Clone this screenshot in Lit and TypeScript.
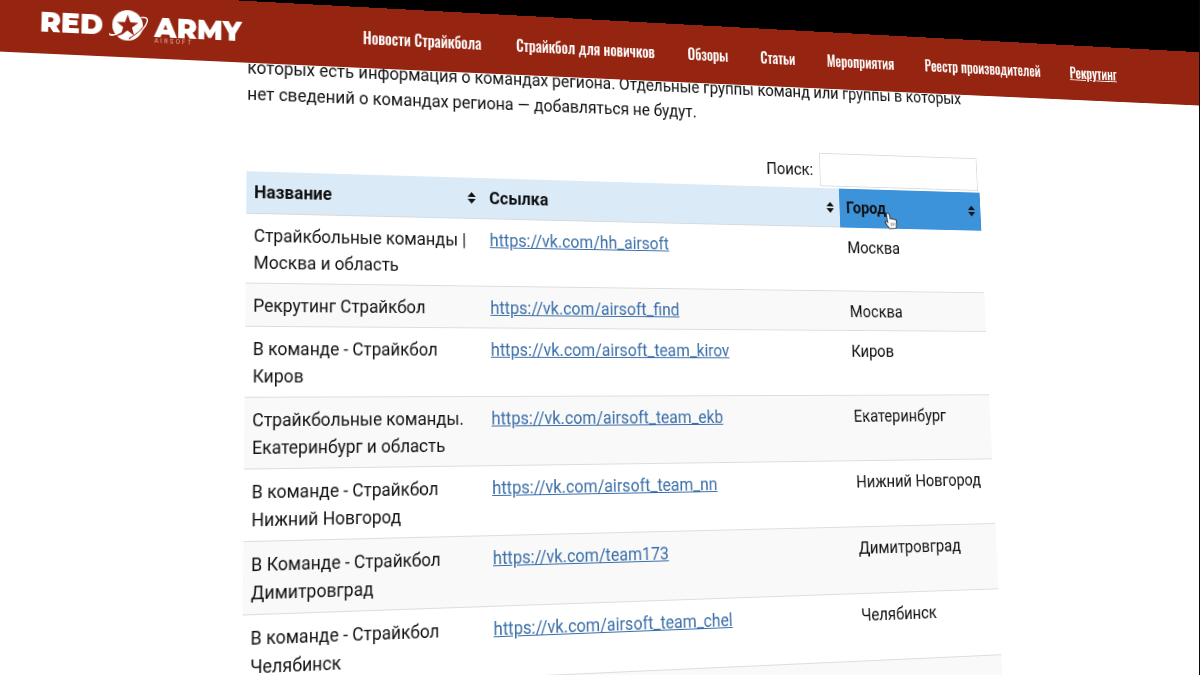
import { LitElement, html, css, svg } from "lit";
import { customElement, property } from "lit/decorators.js";
import { classMap } from "lit/directives/class-map.js";

interface Team {
  name: string;
  link: string;
  city: string;
}

const NAV = [
  "Новости Страйкбола",
  "Страйкбол для новичков",
  "Обзоры",
  "Статьи",
  "Мероприятия",
  "Реестр производителей",
  "Рекрутинг",
];

const COLUMNS = ["Название", "Ссылка", "Город"];

const TEAMS: Team[] = [
  { name: "Страйкбольные команды | Москва и область", link: "https://vk.com/hh_airsoft", city: "Москва" },
  { name: "Рекрутинг Страйкбол", link: "https://vk.com/airsoft_find", city: "Москва" },
  { name: "В команде - Страйкбол Киров", link: "https://vk.com/airsoft_team_kirov", city: "Киров" },
  { name: "Страйкбольные команды. Екатеринбург и область", link: "https://vk.com/airsoft_team_ekb", city: "Екатеринбург" },
  { name: "В команде - Страйкбол Нижний Новгород", link: "https://vk.com/airsoft_team_nn", city: "Нижний Новгород" },
  { name: "В Команде - Страйкбол Димитровград", link: "https://vk.com/team173", city: "Димитровград" },
  { name: "В команде - Страйкбол Челябинск", link: "https://vk.com/airsoft_team_chel", city: "Челябинск" },
];

@customElement("site-logo")
export class SiteLogo extends LitElement {
  static styles = css`
    :host {
      display: block;
    }
    .logo {
      display: flex;
      align-items: center;
      gap: 6px;
      color: #fff;
      text-decoration: none;
      font: 900 28px/32px Montserrat, Inter, "Liberation Sans", sans-serif;
    }
    .mark {
      display: block;
      width: 40px;
      height: 34px;
    }
    .second {
      position: relative;
    }
    .sub {
      position: absolute;
      left: 0;
      top: 26px;
      color: #dfa79d;
      font: 500 6px/8px Inter, "Liberation Sans", sans-serif;
      letter-spacing: 2px;
    }
  `;

  render() {
    return html`
      <a class="logo" href="#">
        <span>RED</span>
        <svg class="mark" viewBox="0 0 40 34" aria-hidden="true">
          ${svg`
            <circle cx="18.500" cy="16.500" r="15.500" fill="#fff"/>
            <path d="M18.500 5.500l2.700 7.800 8.200.2-6.500 5 2.300 7.900-6.700-4.700-6.700 4.700 2.300-7.900-6.500-5 8.200-.2z" fill="#952410"/>
            <path d="M1 27.500c4 1 9-.5 14-4" fill="none" stroke="#952410" stroke-width="1.600"/>
            <path d="M0 24.800c1 2.400 8 1.400 13.500-2.600-4 4.200-10 6.800-12.800 5.300-1-.6-1.100-1.700-.7-2.700z" fill="#fff"/>
            <path d="M37 13.500c-3.500 6.500-10 12.500-17 16.500" fill="none" stroke="#952410" stroke-width="1.400"/>
            <path d="M31.500 8c4.500-1.300 7.500 0 6.800 3.500-1.300 6-8.300 13-16.300 18.500" fill="none" stroke="#fff" stroke-width="1.300"/>
          `}
        </svg>
        <span class="second">ARMY<span class="sub">AIRSOFT</span></span>
      </a>
    `;
  }
}

@customElement("site-header")
export class SiteHeader extends LitElement {
  static styles = css`
    :host {
      display: block;
      position: relative;
      z-index: 1;
      background: #952410;
    }
    .bar {
      display: flex;
      align-items: center;
      justify-content: space-between;
      max-width: 1270px;
      height: 64px;
      margin: 0 auto;
    }
    .nav {
      display: flex;
      gap: 39px;
      padding-right: 20px;
    }
    .item {
      color: #fff;
      text-decoration: none;
      white-space: nowrap;
      font: 500 16px/24px Oswald, "Roboto Condensed", "Liberation Sans", sans-serif;
    }
    .current {
      text-decoration: underline;
    }
  `;

  render() {
    return html`
      <div class="bar">
        <site-logo></site-logo>
        <nav class="nav">
          ${NAV.map(
            (label, i) => html`<a class=${classMap({ item: true, current: i === NAV.length - 1 })} href="#">${label}</a>`,
          )}
        </nav>
      </div>
    `;
  }
}

@customElement("team-table")
export class TeamTable extends LitElement {
  @property({ attribute: false }) teams: Team[] = [];

  static styles = css`
    :host {
      display: block;
    }
    .filter {
      display: flex;
      justify-content: flex-end;
      align-items: center;
      gap: 8px;
      padding: 0 2px 2px 0;
    }
    .search {
      box-sizing: border-box;
      width: 199px;
      height: 37px;
      padding: 0 8px;
      border: 1px solid #ddd;
      background: #fff;
      font: inherit;
    }
    .table {
      width: 100%;
      table-layout: fixed;
      border-collapse: separate;
      border-spacing: 0;
    }
    .name {
      width: 252px;
    }
    .city {
      width: 178px;
    }
    .head {
      position: relative;
      padding: 0;
      border-bottom: 1px solid #d6dade;
      background: #dbeaf7;
    }
    .active {
      border-color: #3c93da;
      background: #3c93da;
    }
    .sort {
      display: flex;
      align-items: center;
      justify-content: space-between;
      width: 100%;
      padding: 7px 7px 8px 8px;
      border: 0;
      background: none;
      color: #111;
      font: inherit;
      font-weight: 700;
      text-align: left;
    }
    .arrows {
      width: 9px;
      height: 12px;
    }
    .pointer {
      position: absolute;
      left: 55px;
      top: 25px;
      width: 18px;
      height: 20px;
    }
    .cell {
      height: 27px;
      padding: 8px 8px 7px;
      border-bottom: 1px solid #ddd;
      vertical-align: top;
    }
    .row:nth-child(even) {
      background: #f9f9f9;
    }
    .link {
      color: #3a6ea8;
      text-decoration: underline;
    }
  `;

  private arrows() {
    return svg`<svg class="arrows" viewBox="0 0 9 12" aria-hidden="true">
      <path d="M4.500 0L9 5H0zM0 7h9l-4.500 5z" fill="#111"/>
    </svg>`;
  }

  private pointer() {
    return svg`<svg class="pointer" viewBox="0 0 16 20" preserveAspectRatio="none" aria-hidden="true">
      <path d="M4.200 1c1.100 0 1.600.8 1.700 1.600l.6 4.400c.5-.7 2-.6 2.400.3.600-.6 2-.4 2.400.5.700-.4 2.200 0 2.300 1.300l.4 4c0 1.700-.9 2.600-1.200 4.400l-7.300.5c-.5-2-3.300-3.900-4.400-6.800-.4-1.100 1-2 2.200-.7l.6.700-1-8.400c-.1-1 .4-1.800 1.300-1.800z" fill="#fff" stroke="#333" stroke-width="1"/>
      <path d="M7.500 11.500l.3 3.500M9.600 11.300l.3 3.500M11.700 11.200l.2 3.300" stroke="#777" stroke-width=".9"/>
    </svg>`;
  }

  render() {
    const last = COLUMNS.length - 1;
    return html`
      <div class="filter">
        <label for="search">Поиск:</label>
        <input class="search" id="search" type="search" />
      </div>
      <table class="table">
        <colgroup>
          <col class="name" />
          <col />
          <col class="city" />
        </colgroup>
        <thead>
          <tr>
            ${COLUMNS.map(
              (title, i) => html`
                <th class=${classMap({ head: true, active: i === last })} scope="col">
                  <button class="sort" type="button">${title}${this.arrows()}</button>
                  ${i === last ? this.pointer() : null}
                </th>
              `,
            )}
          </tr>
        </thead>
        <tbody>
          ${this.teams.map(
            (team) => html`
              <tr class="row">
                <td class="cell">${team.name}</td>
                <td class="cell"><a class="link" href=${team.link}>${team.link}</a></td>
                <td class="cell">${team.city}</td>
              </tr>
            `,
          )}
          <tr class="row">
            <td class="cell" colspan="3"></td>
          </tr>
        </tbody>
      </table>
    `;
  }
}

@customElement("app-root")
export class AppRoot extends LitElement {
  static styles = css`
    :host {
      display: block;
      box-sizing: border-box;
      height: 100vh;
      overflow: hidden;
      border-right: 1px solid #0a0a0a;
      background: #000;
    }
    /* The whole page is a flat sheet seen by a tilted camera. */
    .sheet {
      width: 125vw;
      min-height: 125vh;
      background: #fff;
      color: #111;
      font: 18px/27px Roboto, "Liberation Sans", sans-serif;
      transform-origin: 0 0;
      transform: matrix3d(
        1.000943, 0.052193, 0, 0.00013941,
        -0.027213, 0.97249, 0, -0.00007573,
        0, 0, 1, 0,
        -75, -16, 0, 0.967805
      );
    }
    .content {
      max-width: 848px;
      margin: -9px auto 0;
    }
    .note {
      margin: 0 0 27px;
    }
  `;

  render() {
    return html`
      <div class="sheet">
        <site-header></site-header>
        <main class="content">
          <p class="note">
            которых есть информация о командах региона. Отдельные группы команд или группы в которых
            нет сведений о командах региона — добавляться не будут.
          </p>
          <team-table .teams=${TEAMS}></team-table>
        </main>
      </div>
    `;
  }
}
